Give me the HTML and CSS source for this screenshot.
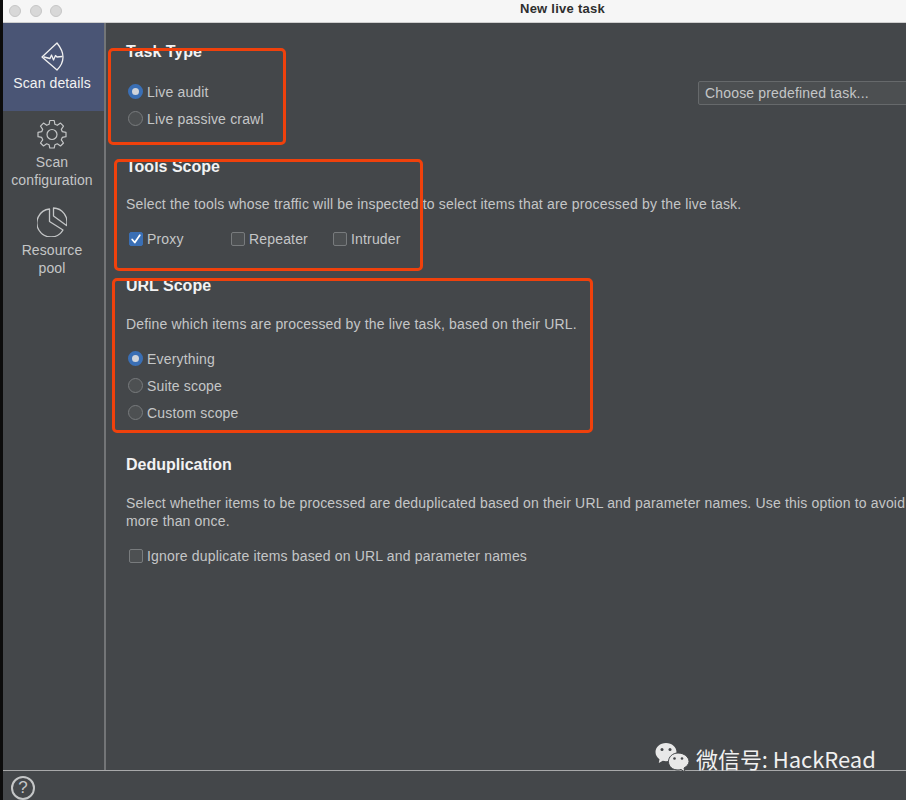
FILE: index.html
```html
<!DOCTYPE html>
<html lang="en">
<head>
<meta charset="utf-8">
<title>New live task</title>
<link rel="stylesheet" href="styles.css">
</head>
<body>
<div class="window">
  <header class="titlebar">
    <div class="lights"><span class="light"></span><span class="light"></span><span class="light"></span></div>
    <div class="title">New live task</div>
  </header>
  <div class="body">
    <nav class="sidebar">
      <div class="nav-item active">
        <svg class="nav-icon" width="24" height="32" viewBox="0 0 24 32" fill="none" stroke="#f0f0f0" stroke-width="1.300" stroke-linejoin="round" stroke-linecap="round"><path d="M17 2C21 7 23 11 23 16C23 20 21 25 17 29L2 16Z"/><path d="M4 16L10 17.500L11.500 14L13.500 19L15.500 14.500L17 16L22 15.500"/></svg>
        <span class="nav-label">Scan details</span>
      </div>
      <div class="nav-item">
        <svg class="nav-icon" width="30" height="30" viewBox="0 0 30 30" fill="none" stroke="#c4c6c7" stroke-width="1.200" stroke-linejoin="round"><path d="M12.800 1.500H17.200L17.900 5.300L20.300 6.300L23.500 4.100L26.500 7.200L24.300 10.300L25.300 12.700L29 13.400V17.700L25.300 18.400L24.300 20.800L26.500 24L23.500 27L20.300 24.800L17.900 25.800L17.200 29H12.800L12.100 25.800L9.700 24.800L6.500 27L3.500 24L5.700 20.800L4.700 18.400L1 17.700V13.400L4.700 12.700L5.700 10.300L3.500 7.200L6.500 4.100L9.700 6.300L12.100 5.300Z"/><circle cx="15" cy="15.500" r="5"/></svg>
        <span class="nav-label">Scan<br>configuration</span>
      </div>
      <div class="nav-item">
        <svg class="nav-icon" width="30" height="30" viewBox="-1 0 30 30" fill="none" stroke="#c4c6c7" stroke-width="1.300" stroke-linejoin="round"><path d="M11.500 2V14.500L25 23A14 14 0 1 1 11.500 2Z"/><path d="M15.500 1V9L28.500 18.500A14 14 0 0 0 15.500 1Z"/></svg>
        <span class="nav-label">Resource<br>pool</span>
      </div>
    </nav>
    <main class="content">
      <section class="section task-type">
        <div class="task-main">
          <h2 class="heading">Task Type</h2>
          <label class="option radio-row first"><span class="radio on"></span>Live audit</label>
          <label class="option radio-row"><span class="radio"></span>Live passive crawl</label>
        </div>
        <div class="select">Choose predefined task...</div>
      </section>
      <section class="section tools">
        <h2 class="heading">Tools Scope</h2>
        <p class="desc">Select the tools whose traffic will be inspected to select items that are processed by the live task.</p>
        <div class="checks">
          <label class="option check-item"><span class="check on"><svg width="12" height="12" viewBox="0 0 12 12" fill="none" stroke="#fff" stroke-width="1.800" stroke-linecap="round" stroke-linejoin="round"><path d="M2.200 6.500L4.800 9.500L9.800 2.200"/></svg></span>Proxy</label>
          <label class="option check-item"><span class="check"></span>Repeater</label>
          <label class="option check-item"><span class="check"></span>Intruder</label>
        </div>
      </section>
      <section class="section url">
        <h2 class="heading">URL Scope</h2>
        <p class="desc">Define which items are processed by the live task, based on their URL.</p>
        <label class="option radio-row first-url"><span class="radio on"></span>Everything</label>
        <label class="option radio-row"><span class="radio"></span>Suite scope</label>
        <label class="option radio-row"><span class="radio"></span>Custom scope</label>
      </section>
      <section class="section dedup">
        <h2 class="heading">Deduplication</h2>
        <p class="desc">Select whether items to be processed are deduplicated based on their URL and parameter names. Use this option to avoid<br>more than once.</p>
        <label class="option dedup-row"><span class="check"></span>Ignore duplicate items based on URL and parameter names</label>
      </section>
    </main>
  </div>
  <footer class="footer"><span class="help">?</span></footer>
</div>
<div class="mark mark-type"></div>
<div class="mark mark-tools"></div>
<div class="mark mark-url"></div>
<div class="wechat">
  <svg width="36" height="32" viewBox="0 0 36 32"><path d="M12 1C6 1 1.500 5 1.500 10C1.500 13 3 15.500 5.500 17.200L4.800 21L8.800 18.800C10 19.100 11 19.300 12 19.300C18 19.300 22.500 15 22.500 10C22.500 5 18 1 12 1Z" fill="#e8e8e8"/><path d="M24 11C18.500 11 14.500 15 14.500 19.500C14.500 24.500 18.500 28 24 28C25 28 26 27.800 27 27.500L31 30L30 26C33 24.300 35 22 35 19.500C35 15 30 11 24 11Z" fill="#e8e8e8" stroke="#44474a"/><circle cx="8" cy="7.500" r="1.500" fill="#44474a"/><circle cx="16" cy="7.500" r="1.500" fill="#44474a"/><circle cx="20.500" cy="16.500" r="1.300" fill="#44474a"/><circle cx="28" cy="16.500" r="1.300" fill="#44474a"/></svg>
  <span class="wechat-text">微信号: HackRead</span>
</div>
</body>
</html>
```
FILE: styles.css
```css
* { box-sizing: border-box; }
html, body { margin: 0; height: 100%; }
body {
  width: 906px;
  height: 800px;
  overflow: hidden;
  position: relative;
  background: #0c0c0c;
  font-family: "Liberation Sans", Arial, sans-serif;
  font-size: 14px;
  letter-spacing: 0.17px;
  color: #c4c6c7;
}
.window {
  margin-left: 3px;
  height: 800px;
  display: flex;
  flex-direction: column;
  background: #44474a;
}
.titlebar {
  height: 23px;
  flex: none;
  background: #f6f6f6;
  border-bottom: 1px solid #cfcfcf;
  display: flex;
  align-items: center;
  position: relative;
}
.lights { display: flex; gap: 8.500px; margin-left: 6px; }
.light {
  width: 12px;
  height: 12px;
  border-radius: 50%;
  background: #d8d8d8;
  border: 1px solid #c6c6c6;
}
.title {
  position: absolute;
  left: 517px;
  top: 1px;
  font-size: 13px;
  font-weight: 700;
  letter-spacing: 0.25px;
  color: #2e2e2e;
}
.body { flex: 1; display: flex; min-height: 0; }
.sidebar {
  width: 103px;
  flex: none;
  border-right: 2px solid #737577;
  display: flex;
  flex-direction: column;
}
.nav-item {
  display: flex;
  flex-direction: column;
  align-items: center;
  text-align: center;
  padding-right: 3px;
  line-height: 18px;
  height: 88px;
  letter-spacing: 0.1px;
}
.nav-item.active { background: #4a5575; color: #f2f2f2; padding-top: 18px; }
.nav-item + .nav-item { padding-top: 8px; }
.nav-icon { display: block; flex: none; margin-bottom: 4px; }
.active .nav-icon { margin-bottom: 1px; }
.nav-label { display: block; }
.content {
  flex: 1;
  min-width: 0;
  padding-left: 20px;
  overflow: hidden;
  white-space: nowrap;
}
.section { display: block; }
.heading {
  margin: 0;
  font-size: 16px;
  line-height: 20px;
  font-weight: 700;
  letter-spacing: 0;
  color: #f2f2f2;
}
.task-type {
  display: flex;
  align-items: flex-start;
  justify-content: space-between;
  padding-top: 19px;
}
.select {
  width: 240px;
  height: 24px;
  flex: none;
  margin-top: 39px;
  margin-right: -32px;
  padding: 3px 0 0 6px;
  line-height: 16px;
  border: 1px solid #66696b;
  border-radius: 2px;
  background: #4c4f51;
}
.option { display: flex; align-items: center; height: 27px; }
.first { margin-top: 16px; }
.radio {
  width: 15px;
  height: 15px;
  border-radius: 50%;
  margin: 0 4px 0 2px;
  border: 1px solid #787b7d;
  background: #4d5052;
  flex: none;
}
.radio.on {
  border: 4px solid #3a6fb5;
  background: #d0d4da;
}
.tools { padding-top: 25px; }
.desc { margin: 19px 0 0; line-height: 17px; }
.checks { display: flex; margin-top: 12px; margin-left: 3px; }
.check-item { width: 102px; }
.check {
  width: 14px;
  height: 14px;
  border-radius: 2px;
  border: 1px solid #787b7d;
  background: #4d5052;
  margin-right: 4px;
  flex: none;
  display: flex;
  align-items: center;
  justify-content: center;
}
.check.on { background: #3a6fb5; border-color: #3a6fb5; }
.url { padding-top: 24px; }
.url .desc { margin-top: 20px; }
.first-url { margin-top: 12px; }
.dedup { padding-top: 29px; }
.dedup .desc { line-height: 18px; }
.dedup-row { margin-top: 12px; margin-left: 3px; }
.footer {
  height: 30px;
  flex: none;
  border-top: 1px solid #a8a9aa;
  padding: 5px 0 0 8px;
}
.help {
  display: block;
  width: 24px;
  height: 24px;
  border-radius: 50%;
  border: 2px solid #c4c6c7;
  text-align: center;
  line-height: 20px;
  font-size: 17px;
  letter-spacing: 0;
}
.mark {
  position: absolute;
  border: 3px solid #f0410c;
  border-radius: 5px;
}
.mark-type { left: 108px; top: 48px; width: 178px; height: 97px; }
.mark-tools { left: 114px; top: 159px; width: 309px; height: 112px; }
.mark-url { left: 112px; top: 278px; width: 481px; height: 155px; }
.wechat {
  position: absolute;
  left: 654px;
  top: 742px;
  display: flex;
  align-items: center;
  gap: 6px;
  color: #f0f0f0;
  letter-spacing: 0;
}
.wechat-text {
  font-family: "Noto Sans CJK SC", "Noto Sans", sans-serif;
  font-size: 22px;
  line-height: 32px;
  letter-spacing: -0.05px;
}
```
